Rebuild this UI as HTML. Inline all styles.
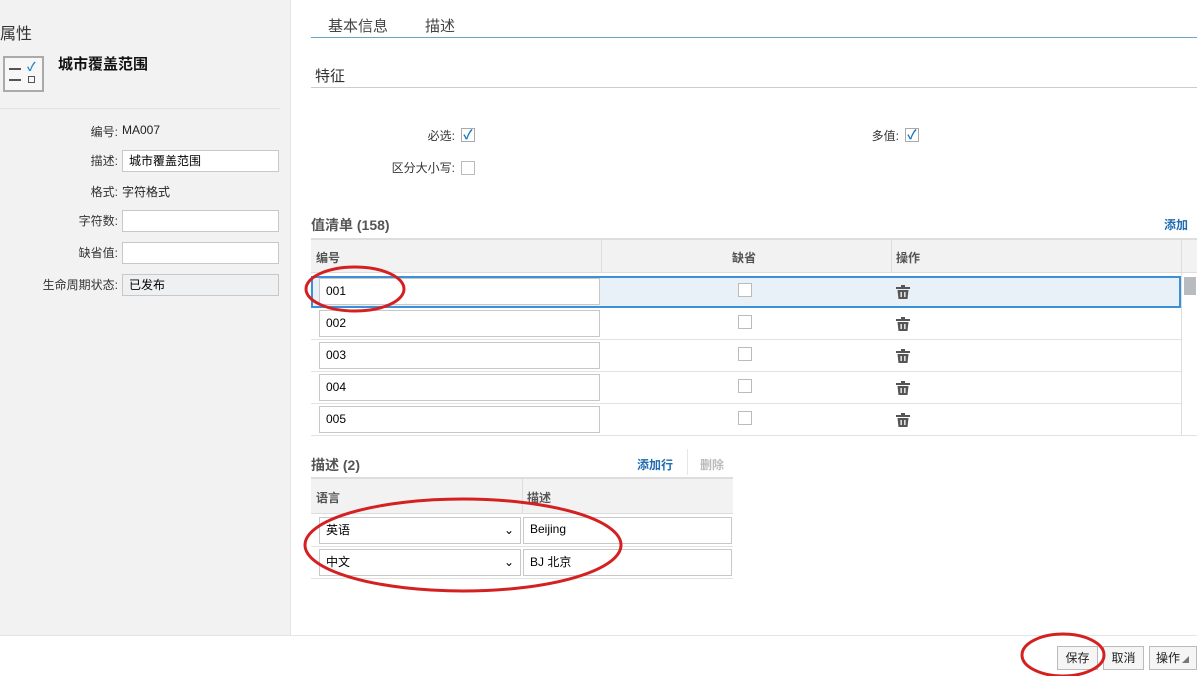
<!DOCTYPE html>
<html><head><meta charset="utf-8"><style>
*{box-sizing:border-box;margin:0;padding:0}
body{width:1197px;height:676px;position:relative;overflow:hidden;background:#fff;font-family:"Liberation Sans","Noto Sans CJK SC",sans-serif;font-size:12px;color:#333}
.a{position:absolute}
.inp{position:absolute;background:#fff;border:1px solid #c8c8c8;padding-left:6px;line-height:25px;font-size:12px;color:#000}
.lbl{position:absolute;text-align:right;font-size:12px;color:#333}
.cb{position:absolute;width:14px;height:14px;border:1px solid #bbb;background:#fff}
.chk{position:absolute;width:14px;height:14px;border:1px solid #aaa;background:#fff;color:#1a7ac0;font-size:13px;line-height:12px;text-align:center;font-weight:bold}
.th{position:absolute;font-weight:bold;color:#555;font-size:12px}
</style></head><body>
<div class="a" style="left:0;top:0;width:291px;height:635px;background:#f2f2f2;border-right:1px solid #e4e4e4"></div>
<div class="a" style="left:0;top:20px;font-size:16px;color:#333">属性</div>
<div class="a" style="left:3px;top:56px;width:41px;height:36px;border:2px solid #aaa;background:#f7f7f7"></div>
<div class="a" style="left:9px;top:68px;width:12px;height:2px;background:#555"></div>
<div class="a" style="left:9px;top:79px;width:12px;height:2px;background:#555"></div>
<div class="a" style="left:28px;top:76px;width:7px;height:7px;border:1.5px solid #555"></div>
<div class="a" style="left:27px;top:58px;color:#2a8ad0;font-weight:bold;font-size:12px">✓</div>
<div class="a" style="left:58px;top:53px;font-size:15px;font-weight:bold;color:#111">城市覆盖范围</div>
<div class="a" style="left:0;top:108px;width:280px;height:1px;background:#e2e2e2"></div>
<div class="lbl" style="right:1079px;top:123px">编号:</div><div class="a" style="left:122px;top:123px;color:#222">MA007</div>
<div class="lbl" style="right:1079px;top:152px">描述:</div><div class="inp" style="left:122px;top:150px;width:157px;height:22px;line-height:20px">城市覆盖范围</div>
<div class="lbl" style="right:1079px;top:183px">格式:</div><div class="a" style="left:122px;top:183px;color:#222">字符格式</div>
<div class="lbl" style="right:1079px;top:212px">字符数:</div><div class="inp" style="left:122px;top:210px;width:157px;height:22px"></div>
<div class="lbl" style="right:1079px;top:244px">缺省值:</div><div class="inp" style="left:122px;top:242px;width:157px;height:22px"></div>
<div class="lbl" style="right:1079px;top:276px">生命周期状态:</div><div class="inp" style="left:122px;top:274px;width:157px;height:22px;line-height:20px;background:#eef0f2">已发布</div>

<div class="a" style="left:328px;top:15px;font-size:15px;color:#444">基本信息</div>
<div class="a" style="left:425px;top:15px;font-size:15px;color:#444">描述</div>
<div class="a" style="left:311px;top:37px;width:886px;height:1px;background:#6aa6c0"></div>
<div class="a" style="left:315px;top:65px;font-size:15px;color:#333">特征</div>
<div class="a" style="left:311px;top:87px;width:886px;height:1px;background:#ccc"></div>
<div class="lbl" style="right:742px;top:127px">必选:</div><div class="chk" style="left:461px;top:128px">✓</div>
<div class="lbl" style="right:298px;top:127px">多值:</div><div class="chk" style="left:905px;top:128px">✓</div>
<div class="lbl" style="right:742px;top:159px">区分大小写:</div><div class="cb" style="left:461px;top:161px"></div>

<div class="a" style="left:311px;top:215px;font-size:14px;font-weight:bold;color:#555">值清单 (158)</div>
<div class="a" style="left:1164px;top:216px;font-size:12px;font-weight:bold;color:#1e6bb0">添加</div>
<div class="a" style="left:311px;top:238px;width:886px;height:35px;background:#f2f2f2;border-top:2px solid #ddd;border-bottom:1px solid #ddd"></div>
<div class="a" style="left:601px;top:240px;width:1px;height:33px;background:#ddd"></div>
<div class="a" style="left:891px;top:240px;width:1px;height:33px;background:#ddd"></div>
<div class="a" style="left:1181px;top:240px;width:1px;height:196px;background:#ddd"></div>
<div class="th" style="left:316px;top:249px">编号</div>
<div class="th" style="left:732px;top:249px">缺省</div>
<div class="th" style="left:896px;top:249px">操作</div>
<div class="a" style="left:311px;top:276px;width:870px;height:32px;background:#e8f0f8;border:2px solid #3d8fd8"></div>
<div class="a" style="left:1184px;top:277px;width:12px;height:18px;background:#b8bcc0"></div>
<div class="a" style="left:311px;top:339px;width:870px;height:1px;background:#e2e2e2"></div>
<div class="a" style="left:311px;top:371px;width:870px;height:1px;background:#e2e2e2"></div>
<div class="a" style="left:311px;top:403px;width:870px;height:1px;background:#e2e2e2"></div>
<div class="a" style="left:311px;top:435px;width:886px;height:1px;background:#e2e2e2"></div>
<div class="inp" style="left:319px;top:278px;width:281px;height:27px">001</div>
<div class="inp" style="left:319px;top:310px;width:281px;height:27px">002</div>
<div class="inp" style="left:319px;top:342px;width:281px;height:27px">003</div>
<div class="inp" style="left:319px;top:374px;width:281px;height:27px">004</div>
<div class="inp" style="left:319px;top:406px;width:281px;height:27px">005</div>
<div class="cb" style="left:738px;top:283px"></div>
<div class="cb" style="left:738px;top:315px"></div>
<div class="cb" style="left:738px;top:347px"></div>
<div class="cb" style="left:738px;top:379px"></div>
<div class="cb" style="left:738px;top:411px"></div>
<svg class="a" style="left:0;top:0" width="1197" height="676">
<defs><g id="t"><rect x="0" y="2" width="14" height="2" fill="#555"/><rect x="5" y="0" width="4" height="2" fill="#555"/><path d="M1.5 5h11l-1 9h-9z" fill="#555"/><rect x="4.5" y="7" width="1.3" height="5" fill="#fff"/><rect x="8.2" y="7" width="1.3" height="5" fill="#fff"/></g></defs>
<use href="#t" x="896" y="285"/><use href="#t" x="896" y="317"/><use href="#t" x="896" y="349"/><use href="#t" x="896" y="381"/><use href="#t" x="896" y="413"/>
</svg>

<div class="a" style="left:311px;top:455px;font-size:14px;font-weight:bold;color:#555">描述 (2)</div>
<div class="a" style="left:637px;top:456px;font-weight:bold;color:#1e6bb0">添加行</div>
<div class="a" style="left:687px;top:449px;width:1px;height:26px;background:#e6e6e6"></div>
<div class="a" style="left:700px;top:456px;font-weight:bold;color:#bbb">删除</div>
<div class="a" style="left:311px;top:477px;width:422px;height:37px;background:#f2f2f2;border-top:2px solid #ddd;border-bottom:1px solid #ddd"></div>
<div class="a" style="left:522px;top:479px;width:1px;height:35px;background:#ddd"></div>
<div class="th" style="left:316px;top:489px">语言</div>
<div class="th" style="left:527px;top:489px">描述</div>
<div class="a" style="left:311px;top:546px;width:422px;height:1px;background:#e2e2e2"></div>
<div class="a" style="left:311px;top:578px;width:422px;height:1px;background:#e2e2e2"></div>
<div class="inp" style="left:319px;top:517px;width:202px;height:27px">英语<span style="position:absolute;right:6px;top:0">⌄</span></div>
<div class="inp" style="left:319px;top:549px;width:202px;height:27px">中文<span style="position:absolute;right:6px;top:0">⌄</span></div>
<div class="inp" style="left:523px;top:517px;width:209px;height:27px;line-height:22px">Beijing</div>
<div class="inp" style="left:523px;top:549px;width:209px;height:27px;line-height:24px">BJ 北京</div>

<div class="a" style="left:0;top:635px;width:1197px;height:1px;background:#e4e4e4"></div>
<div class="a" style="left:1057px;top:646px;width:41px;height:24px;border:1px solid #bbb;background:#f5f5f5;text-align:center;line-height:22px;color:#222">保存</div>
<div class="a" style="left:1103px;top:646px;width:41px;height:24px;border:1px solid #bbb;background:#f5f5f5;text-align:center;line-height:22px;color:#222">取消</div>
<div class="a" style="left:1149px;top:646px;width:48px;height:24px;border:1px solid #bbb;background:#f5f5f5;padding-left:6px;line-height:22px;color:#222">操作<span style="font-size:7px;color:#777"> ◢</span></div>

<svg class="a" style="left:0;top:0" width="1197" height="676" fill="none" stroke="#d42020" stroke-width="3">
<ellipse cx="355" cy="289" rx="49" ry="22"/>
<ellipse cx="463" cy="545" rx="158" ry="46"/>
<ellipse cx="1063" cy="655" rx="41" ry="21"/>
</svg>
</body></html>
